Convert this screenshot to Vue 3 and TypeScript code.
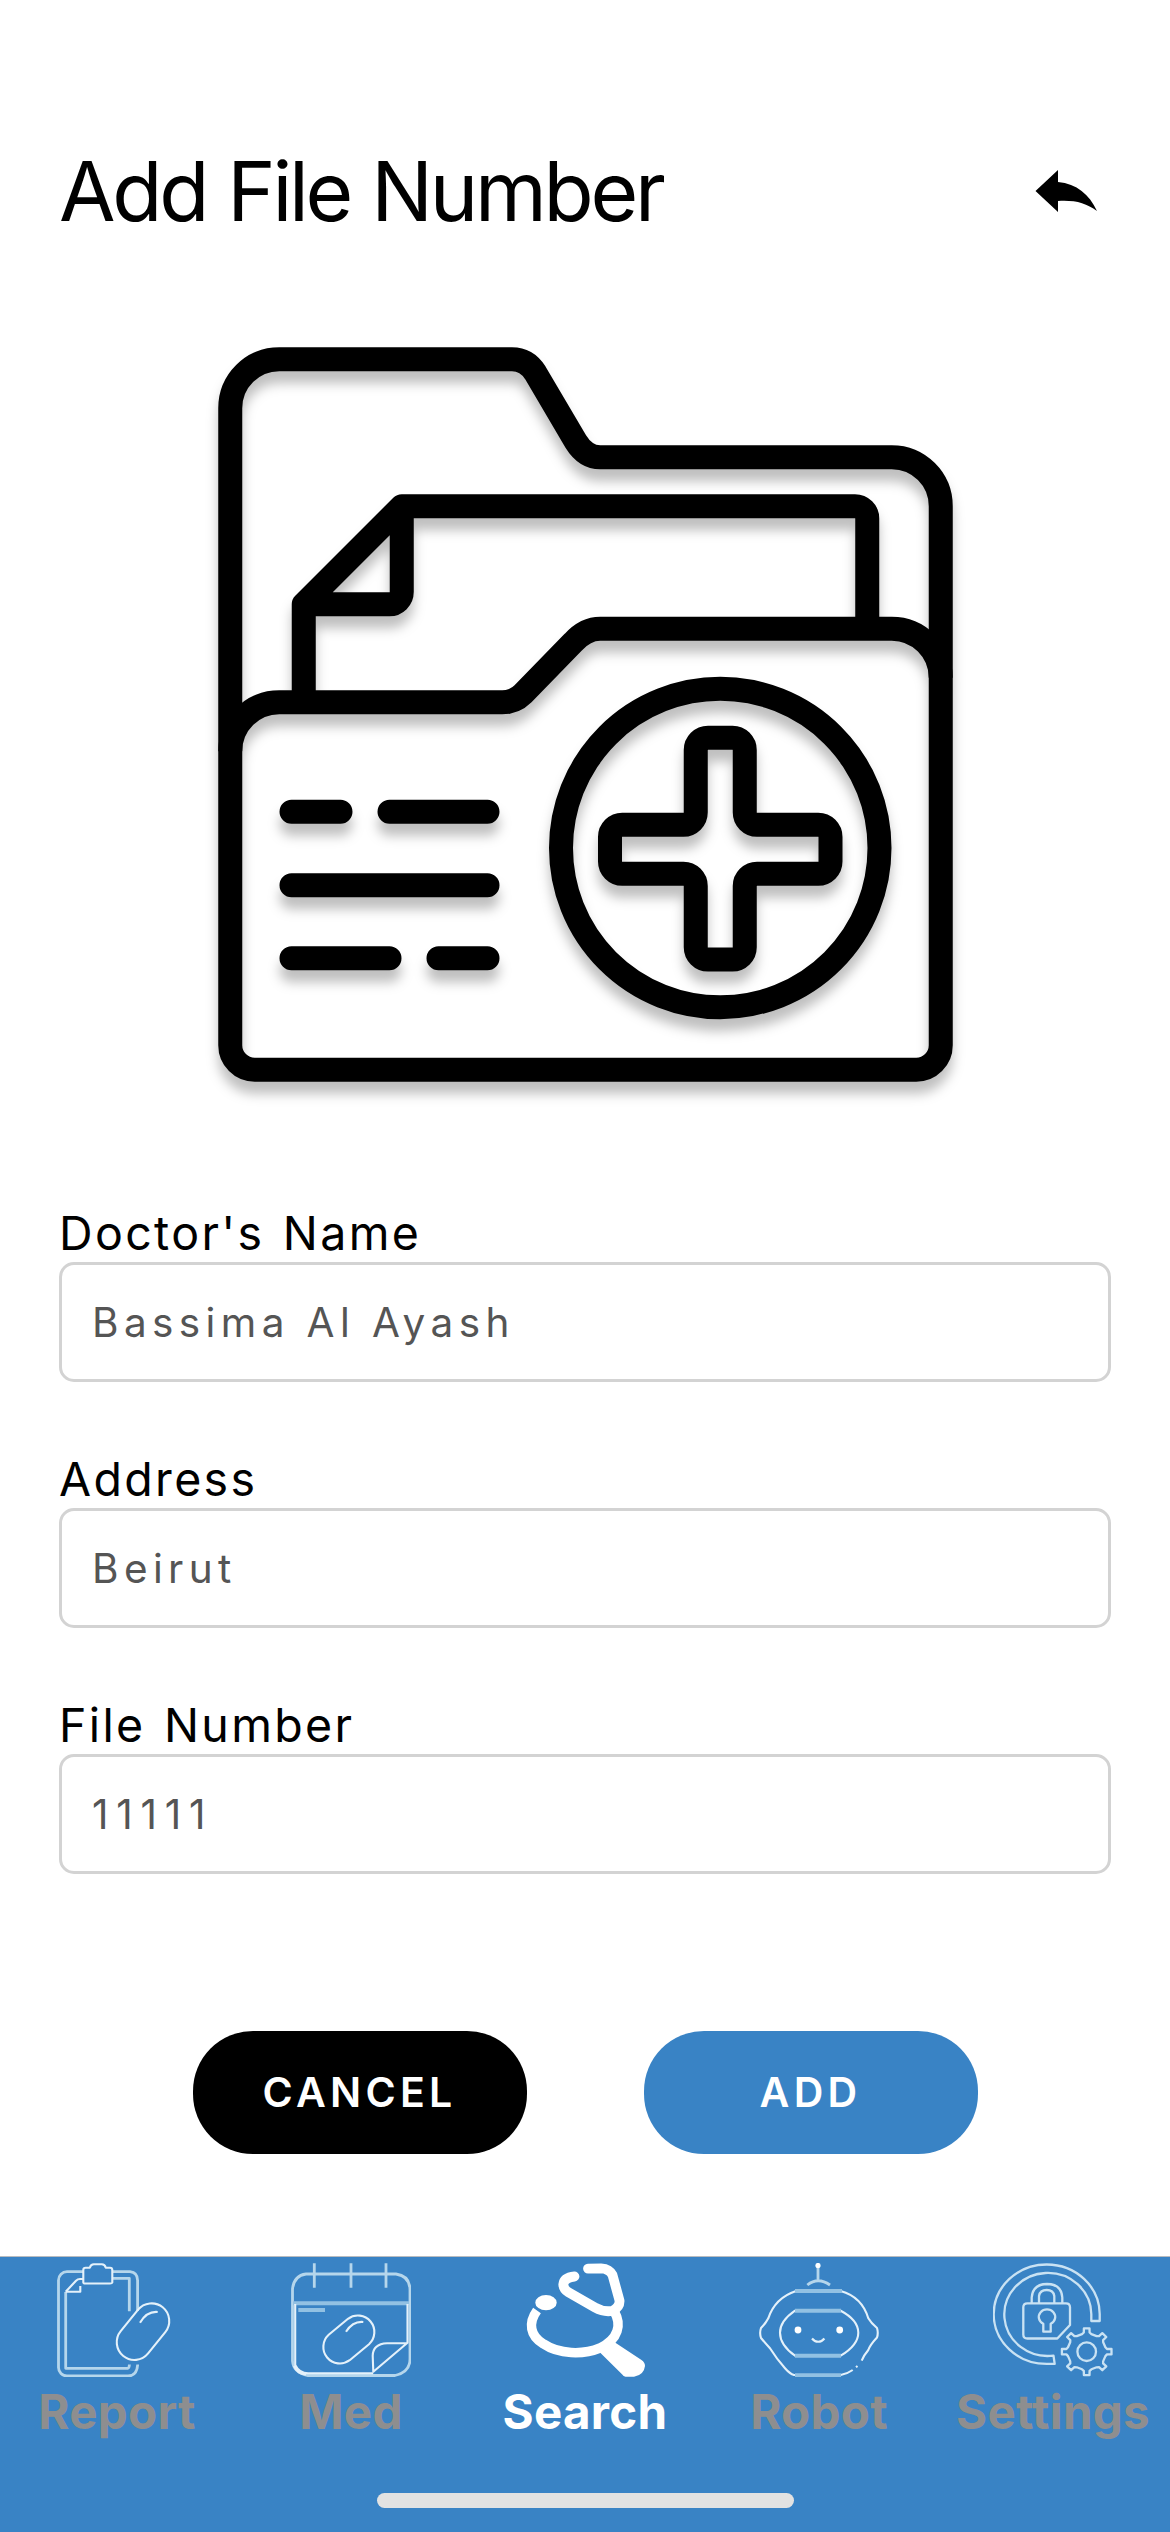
<script setup lang="ts">
import { ref } from 'vue'

interface Field {
  label: string
  value: string
  numeric?: boolean
}

type TabKey = 'report' | 'med' | 'search' | 'robot' | 'settings'

interface Tab {
  key: TabKey
  label: string
}

const fields = ref<Field[]>([
  { label: "Doctor's Name", value: 'Bassima Al Ayash' },
  { label: 'Address', value: 'Beirut' },
  { label: 'File Number', value: '11111', numeric: true },
])

const tabs: Tab[] = [
  { key: 'report', label: 'Report' },
  { key: 'med', label: 'Med' },
  { key: 'search', label: 'Search' },
  { key: 'robot', label: 'Robot' },
  { key: 'settings', label: 'Settings' },
]

const activeTab = ref<TabKey>('search')

/** Outline of an eight-toothed gear around (cx, cy). */
function gearPath(cx: number, cy: number): string {
  const profile: [number, number][] = [
    [-14, 0.77],
    [-8, 0.82],
    [-6.5, 1],
    [6.5, 1],
    [8, 0.82],
    [14, 0.77],
  ]
  const points: string[] = []
  for (let tooth = 0; tooth < 8; tooth++) {
    for (const [offset, scale] of profile) {
      const angle = ((tooth * 45 + offset) * Math.PI) / 180
      const x = cx + Math.cos(angle) * 25 * scale
      const y = cy + Math.sin(angle) * 23.6 * scale
      points.push(`${x.toFixed(1)} ${y.toFixed(1)}`)
    }
  }
  return `M${points.join('L')}Z`
}

const gear = gearPath(93.7, 88.7)
</script>

<template>
  <div class="screen">
    <header class="header">
      <h1 class="title">Add File Number</h1>
      <button class="back" aria-label="Back">
        <svg viewBox="0 0 66 46" width="66" height="46">
          <path d="M1.5 22 24 1v12C43 15 55 25 63 42c-11-8-22-11-39-10v11Z" />
        </svg>
      </button>
    </header>

    <svg class="folder" viewBox="0 0 30 30" width="735" height="735">
      <path
        d="M.5 2.5a2 2 0 0 1 2-2H12q.6 0 .95.55L14.6 3.85q.4.65 1 .65H27.5a2 2 0 0 1 2 2v22a1 1 0 0 1-1 1h-27a1 1 0 0 1-1-1Z"
      />
      <path d="M3.5 14.5v-4l4-4H26a.5.5 0 0 1 .5.5v4.5M7.5 6.5V10a.5.5 0 0 1-.5.5H3.5" />
      <path d="M.5 16.5a2 2 0 0 1 2-2h9.1q.5 0 .85-.35L14.5 12.05q.5-.55 1.1-.55h11.9a2 2 0 0 1 2 2" />
      <circle cx="20.5" cy="20.45" r="6.5" />
      <path
        d="M20 15.95h1a.5.5 0 0 1 .5.5V19a.5.5 0 0 0 .5.5h2.5a.5.5 0 0 1 .5.5v1a.5.5 0 0 1-.5.5H22a.5.5 0 0 0-.5.5v2.5a.5.5 0 0 1-.5.5h-1a.5.5 0 0 1-.5-.5V22a.5.5 0 0 0-.5-.5h-2.5a.5.5 0 0 1-.5-.5v-1a.5.5 0 0 1 .5-.5H19a.5.5 0 0 0 .5-.5v-2.55a.5.5 0 0 1 .5-.5Z"
      />
      <path d="M3 18.97h2M7 18.97h4M3 21.97h8M3 24.95h4M9 24.95h2" />
    </svg>

    <form class="form" @submit.prevent>
      <label v-for="field in fields" :key="field.label" class="field">
        <span class="label">{{ field.label }}</span>
        <input v-model="field.value" class="input" :class="{ numeric: field.numeric }" type="text" />
      </label>
      <div class="actions">
        <button type="button" class="action cancel">CANCEL</button>
        <button type="submit" class="action add">ADD</button>
      </div>
    </form>

    <nav class="tabbar">
      <div class="tabs">
        <button
          v-for="tab in tabs"
          :key="tab.key"
          class="tab"
          :class="{ active: tab.key === activeTab }"
          @click="activeTab = tab.key"
        >
          <svg class="icon" viewBox="0 0 120 114" width="120" height="114">
            <g v-if="tab.key === 'report'">
              <path
                class="soft"
                d="M26.3 8.7H10a8.5 8.5 0 0 0-8.5 8.5v87.3a8.5 8.5 0 0 0 8.5 8.5h61q9 0 9.7-11.5M55.3 8.7H73q7.6.8 7.6 8.8V48"
              />
              <path class="soft" d="M8.7 29v76.3h62q1.500 0 1.700-3.800M55.300 15.300h17v33" />
              <path d="M8.700 28.700 19 17.800q1.700-1.800 4-1.800h3M8.700 28.700h14.600V23" />
              <path d="M26.300 7q0-2.300 2.300-2.300h4.200q1-3.400 4-3.400h8q3 0 4 3.400H53q2.300 0 2.300 2.300v12.500q-.3 1-2.300 1H29q-2.500 0-2.700-1Z" />
              <path d="M80.900 46.900A17.600 17.600 0 0 1 108.300 69.100L91.100 90.400A17.600 17.600 0 0 1 63.700 68.200ZM83 59.700Q90 48 100.700 49" />
            </g>

            <g v-else-if="tab.key === 'med'">
              <path class="soft" d="M15 11h90q14 2 14 16v69q0 13-15 16.500H17Q2.500 110 1.500 98V26Q3 12.500 15 11Z" />
              <path class="faint" d="M2 40.300h116M7.300 47H34" />
              <path class="soft" d="M23.300.3v24.500M60 .3v24.500M95 .3v24.500" />
              <path d="M4.200 41v61q4 8.300 13 8.300h65M3 103q3 8 12 8.500" />
              <path d="M116.500 41v38.700L82.300 108.700l-.6-16Q82 81 96 80.300h20.500" />
              <path d="M57 55.800A16.500 16.500 0 0 1 78 81.200L58.700 97.200A16.500 16.500 0 0 1 37.700 71.800ZM55 68.700Q62 58 72.300 59" />
            </g>

            <g v-else-if="tab.key === 'search'">
              <ellipse class="solid" cx="21" cy="39.700" rx="10.700" ry="7.600" />
              <path class="bold" d="M12 47.500C3 60 5 73 18.300 80.800C34 91.500 58 92 75 85C94 76 96.500 61 89.500 49" />
              <path
                class="bold tube"
                d="M49.500 13.500Q39 14.500 38.300 21.500Q38.500 26 43 29L70 44.500Q79 49.500 87.500 47.800Q95 44 94.500 37.500L87.500 12Q84.500 5.800 76 5.300L63 5.700"
              />
              <path class="solid" d="M75 89.500 90 79.500 116.500 97q3.500 2.600 3.500 6-1 9-11 10.800h-8.500q-2-.5-3.500-2.500Z" />
            </g>

            <g v-else-if="tab.key === 'robot'">
              <path class="soft" d="M59 4v13M48.300 22Q59 13.500 71 22" />
              <circle class="solid" cx="59" cy="2.500" r="2.600" />
              <path
                d="M102.700 97.700Q105 92 109.300 87Q111 82 118 74.500Q119.500 70 118 65Q112 60 109.300 55.300Q103 34 81.700 28H37Q16 35 9.300 55.300Q7 60 2 65Q.3 70 2 75Q7 81 11 85.300Q17 95 26 105.300Q31 111 35 112H81.700Q88 111 93.700 107M97 104.300l1.500-1.300"
              />
              <path d="M36 47.700H81.700Q99.300 57 99.300 69.700Q99.300 82 81.700 92.700H36Q21 82 21 69.700Q21 58 36 47.700Z" />
              <path class="faint" d="M36 28h47M36 112.300h46M36 92.700h46M36 47.700h46" />
              <circle class="solid" cx="39" cy="67" r="3.400" />
              <circle class="solid" cx="80.700" cy="67" r="3.400" />
              <path d="M53 75.500q2.500 3.200 6.200 3.200t6.200-3.200" />
            </g>

            <g v-else class="thin">
              <path d="M106.700 58V51A53 49.700 0 1 0 53.700 100.900H61.700L60.500 92.600A43.500 41.500 0 1 1 98.300 51V58Z" />
              <path
                d="M34.300 40.300H73q4 0 4 4V62L64.300 75.500h-30q-4 0-4-4V44.300q0-4 4-4ZM38.700 40V34.500q1-13.300 15.300-13.500 14.500.2 15.300 13.500V40M46 40V33q1-6 7.700-6t7.600 6v7"
              />
              <path d="M50.300 68.700V60.800A8.200 7.600 0 1 1 57.700 60.800V68.700Z" />
              <path :d="gear" />
              <circle cx="93.700" cy="88.700" r="9.300" />
            </g>
          </svg>
          <span class="tab-label">{{ tab.label }}</span>
        </button>
      </div>
      <div class="home-indicator"></div>
    </nav>
  </div>
</template>

<style>
body {
  background: #fff;
}
</style>

<style scoped>
.screen {
  display: flex;
  flex-direction: column;
  width: 1170px;
  height: 2532px;
  box-sizing: border-box;
  padding-top: 142px;
  overflow: hidden;
  background: #fff;
  color: #000;
  font-family: Inter, 'Liberation Sans', sans-serif;
}

button {
  border: 0;
  padding: 0;
  background: none;
  font-family: inherit;
}

.header {
  display: flex;
  align-items: center;
  justify-content: space-between;
  height: 100px;
  padding: 0 70px 0 59px;
}

.title {
  margin: 0;
  font-size: 82px;
  line-height: 100px;
  font-weight: 400;
  letter-spacing: -3.3px;
  word-spacing: 1.5px;
}

.back {
  display: flex;
}

.folder {
  align-self: center;
  flex: none;
  margin-top: 105px;
  overflow: visible;
  fill: none;
  stroke: #000;
  stroke-width: 0.98;
  stroke-linejoin: round;
  filter: drop-shadow(0 12px 6px rgba(0, 0, 0, 0.25));
}

.folder path:last-child {
  stroke-linecap: round;
}

.form {
  display: flex;
  flex-direction: column;
  gap: 66px;
  margin-top: 123px;
  padding: 0 59px;
}

.field {
  display: flex;
  flex-direction: column;
  height: 180px;
}

.label {
  height: 57px;
  font-size: 46.5px;
  line-height: 57px;
  letter-spacing: 2.35px;
  word-spacing: 3px;
}

.input {
  box-sizing: border-box;
  width: 1052px;
  height: 120px;
  border: 3px solid #d3d3d3;
  border-radius: 15px;
  outline: 0;
  padding: 0 30px;
  background: #fff;
  color: #555;
  font-family: inherit;
  font-size: 40.5px;
  letter-spacing: 5.4px;
}

.input.numeric {
  letter-spacing: 7.8px;
}

.actions {
  display: flex;
  justify-content: center;
  gap: 117px;
  margin-top: 88px;
}

.action {
  width: 334px;
  height: 123px;
  border-radius: 60px;
  color: #fff;
  font-size: 41px;
  font-weight: 600;
  line-height: 123px;
  letter-spacing: 4.3px;
}

.cancel {
  background: #000;
}

.add {
  background: #3983c5;
}

.tabbar {
  display: flex;
  flex-direction: column;
  align-items: center;
  justify-content: space-between;
  box-sizing: border-box;
  height: 276px;
  margin-top: auto;
  border-top: 1px solid #b9bcc0;
  padding: 6px 0 24px;
  background: #3983c5;
}

.tabs {
  display: grid;
  grid-template-columns: repeat(5, 234px);
}

.tab {
  display: flex;
  flex-direction: column;
  align-items: center;
  color: #8e8e8f;
}

.tab.active {
  color: #fff;
}

.icon {
  overflow: hidden;
  fill: none;
  stroke: #e4f1fa;
  stroke-width: 2.1;
  stroke-linejoin: round;
}

.icon .soft {
  stroke: #b5d6ec;
  stroke-width: 2.8;
}

.icon .faint {
  stroke: #92c1e3;
  stroke-width: 4;
}

.icon .thin {
  stroke: #c9e2f3;
  stroke-width: 2.3;
}

.icon .solid {
  fill: #fff;
  stroke: none;
}

.icon .bold {
  stroke: #fff;
  stroke-width: 9.5;
}

.icon .tube {
  stroke-linecap: round;
  stroke-width: 9.8;
}

.tab-label {
  height: 70px;
  font-size: 47.5px;
  font-weight: 700;
  line-height: 70px;
  letter-spacing: 0.3px;
}

.home-indicator {
  width: 417px;
  height: 15px;
  border-radius: 8px;
  background: #e2e2e2;
}
</style>
